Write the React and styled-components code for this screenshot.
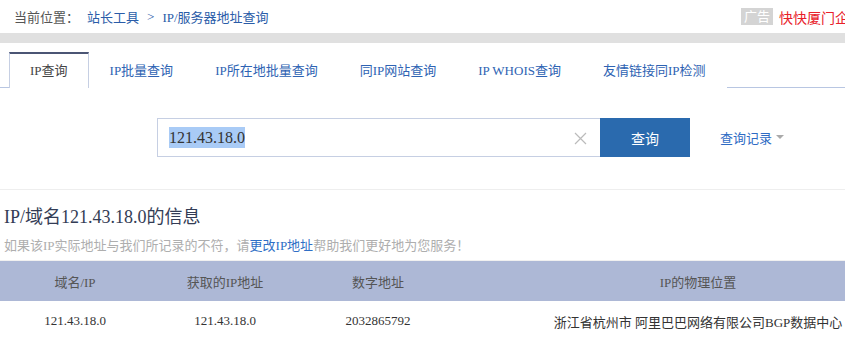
import React from "react";
import styled, { createGlobalStyle } from "styled-components";

const Global = createGlobalStyle`
  html, body { margin: 0; padding: 0; background: #fff; overflow: hidden; }
  body { font-family: "Liberation Serif", "Noto Sans CJK SC", serif; }
`;

const Page = styled.div`
  width: 940px;
`;

const Crumbs = styled.div`
  height: 33px;
  display: flex;
  align-items: center;
  padding: 0 0 0 14px;
  font-size: 13px;
  color: #555;
`;

const CrumbLabel = styled.span`
  margin-right: 8px;
`;

const CrumbLink = styled.a`
  color: #2a5ca8;
  text-decoration: none;
`;

const CrumbSep = styled.span`
  color: #2a5ca8;
  margin: 0 8px;
`;

const AdArea = styled.div`
  margin-left: auto;
  display: flex;
  align-items: center;
  gap: 6px;
  width: 199px;
  white-space: nowrap;
  overflow: hidden;
`;

const AdTag = styled.span`
  background: #d4d4d4;
  color: #fff;
  font-size: 13px;
  padding: 0 3px;
  line-height: 17px;
`;

const AdText = styled.span`
  color: #e8202a;
  font-size: 14px;
`;

const Band = styled.div`
  height: 10px;
  background: #e0e0e0;
`;

const Tabs = styled.div`
  display: flex;
  margin-top: 9px;
  padding-left: 9px;
  border-bottom: 1px solid #b8c6e2;
  height: 35px;
`;

const Tab = styled.div`
  padding: 0 20px;
  font-size: 13px;
  line-height: 33px;
  color: ${(p) => (p.$active ? "#444" : "#2e63b3")};
  background: #fff;
  border: 1px solid ${(p) => (p.$active ? "#c6cfe3" : "transparent")};
  border-top: 2px solid ${(p) => (p.$active ? "#4b5574" : "transparent")};
  border-bottom: none;
  height: 34px;
  margin-bottom: ${(p) => (p.$active ? "-1px" : "0")};
  white-space: nowrap;
`;

const SearchRow = styled.div`
  display: flex;
  align-items: center;
  padding: 30px 0 32px 157px;
  border-bottom: 1px solid #eeeeee;
`;

const InputBox = styled.div`
  width: 431px;
  height: 37px;
  border: 1px solid #c6cfe3;
  border-right: none;
  display: flex;
  align-items: center;
  padding-left: 11px;
  box-sizing: content-box;
  position: relative;
`;

const Selected = styled.span`
  font-size: 16px;
  color: #333;
  background: #a9cbf6;
  line-height: 21px;
  margin-top: -1px;
`;

const ClearIcon = styled.svg`
  position: absolute;
  right: 13px;
  top: 13px;
`;

const Button = styled.div`
  width: 90px;
  height: 39px;
  background: #2a6aae;
  color: #fff;
  font-size: 14px;
  display: flex;
  align-items: center;
  justify-content: center;
`;

const History = styled.div`
  margin-left: 30px;
  display: flex;
  align-items: center;
  gap: 4px;
  color: #2e6bc4;
  font-size: 13px;
`;

const Caret = styled.span`
  width: 0;
  height: 0;
  border-left: 4px solid transparent;
  border-right: 4px solid transparent;
  border-top: 4px solid #aaa;
  margin-top: -1px;
`;

const Heading = styled.h2`
  margin: 0;
  padding: 14px 0 0 4px;
  font-size: 18px;
  font-weight: normal;
  color: #333c55;
  line-height: 26px;
`;

const Notice = styled.p`
  margin: 0;
  padding: 6px 0 0 4px;
  font-size: 13px;
  color: #aeaeae;
  line-height: 20px;
  height: 24px;
  border-bottom: 1px solid #f0f0f0;
`;

const NoticeLink = styled.a`
  color: #2f6fc6;
  text-decoration: none;
`;

const Table = styled.div`
  display: grid;
  grid-template-columns: 150px 150px 156px 1fr;
`;

const HeadCell = styled.div`
  background: #adb8d6;
  height: 40px;
  display: flex;
  align-items: center;
  justify-content: center;
  font-size: 13px;
  color: #555;
`;

const Cell = styled.div`
  height: 40px;
  display: flex;
  align-items: center;
  justify-content: center;
  font-size: 13px;
  color: #333;
`;

const tabs = ["IP查询", "IP批量查询", "IP所在地批量查询", "同IP网站查询", "IP WHOIS查询", "友情链接同IP检测"];

export default function App() {
  return (
    <Page>
      <Global />
      <Crumbs>
        <CrumbLabel>当前位置：</CrumbLabel>
        <CrumbLink>站长工具</CrumbLink>
        <CrumbSep>&gt;</CrumbSep>
        <CrumbLink>IP/服务器地址查询</CrumbLink>
        <AdArea>
          <AdTag>广告</AdTag>
          <AdText>快快厦门企业邮箱</AdText>
        </AdArea>
      </Crumbs>
      <Band />
      <Tabs>
        {tabs.map((t, i) => (
          <Tab key={t} $active={i === 0}>{t}</Tab>
        ))}
      </Tabs>
      <SearchRow>
        <InputBox>
          <Selected>121.43.18.0</Selected>
          <ClearIcon width="13" height="13" viewBox="0 0 13 13">
            <path d="M1 1 L12 12 M12 1 L1 12" stroke="#bbb" strokeWidth="1.2" fill="none" />
          </ClearIcon>
        </InputBox>
        <Button>查询</Button>
        <History>
          查询记录
          <Caret />
        </History>
      </SearchRow>
      <Heading>IP/域名121.43.18.0的信息</Heading>
      <Notice>
        如果该IP实际地址与我们所记录的不符，请<NoticeLink>更改IP地址</NoticeLink>帮助我们更好地为您服务！
      </Notice>
      <Table>
        <HeadCell>域名/IP</HeadCell>
        <HeadCell>获取的IP地址</HeadCell>
        <HeadCell>数字地址</HeadCell>
        <HeadCell>IP的物理位置</HeadCell>
        <Cell>121.43.18.0</Cell>
        <Cell>121.43.18.0</Cell>
        <Cell>2032865792</Cell>
        <Cell>浙江省杭州市 阿里巴巴网络有限公司BGP数据中心</Cell>
      </Table>
    </Page>
  );
}
